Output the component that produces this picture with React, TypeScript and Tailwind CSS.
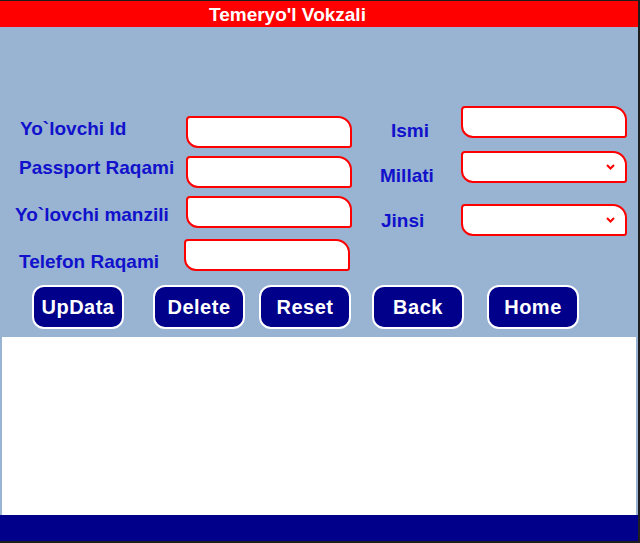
import React from "react";

const labelCls =
  "font-['Liberation_Sans',Arial,sans-serif] font-bold text-[19px] text-[#1111cc] leading-none whitespace-nowrap";

const boxCls =
  "h-[32px] w-[166px] bg-white border-2 border-[#ff0000] rounded-tl-[4px] rounded-tr-[14px] rounded-bl-[12px] rounded-br-[3px]";

const Field = ({ select }: { select?: boolean }) => (
  <div className={boxCls + " shrink-0 flex items-center justify-end pr-[10px]"}>
    {select && (
      <svg width="9" height="6" viewBox="0 0 9 6">
        <path d="M1 1 L4.5 4.5 L8 1" stroke="#ff0000" strokeWidth="2" fill="none" />
      </svg>
    )}
  </div>
);

const Row = ({
  label,
  labelBox,
  select,
  className,
}: {
  label: string;
  labelBox: string;
  select?: boolean;
  className?: string;
}) => (
  <div className={"flex items-start h-[32px] " + (className || "")}>
    <div className={labelBox}>
      <span className={labelCls}>{label}</span>
    </div>
    <Field select={select} />
  </div>
);

const Btn = ({ label, className }: { label: string; className?: string }) => (
  <button
    className={
      "h-[44px] w-[92px] shrink-0 rounded-[12px] border-2 border-white bg-[#00008b] text-white font-['Liberation_Sans',Arial,sans-serif] font-bold text-[20px] tracking-[0.5px] " +
      (className || "")
    }
  >
    {label}
  </button>
);

export default function App() {
  return (
    <div className="w-[640px] h-[543px] bg-[#1e1e1e] pt-px pr-[2px] pb-[2px] flex flex-col">
      <div className="h-[26px] shrink-0 bg-[#ff0000] flex items-center pl-[209px]">
        <span className="font-['Liberation_Sans',Arial,sans-serif] font-bold text-[19px] text-white leading-none">
          Temeryo'l Vokzali
        </span>
      </div>

      <div className="bg-[#98b4d2] flex-1 flex flex-col">
        <div className="flex">
          {/* left column */}
          <div className="w-[360px] pt-[89px] flex flex-col">
            <Row label="Yo`lovchi Id" labelBox="w-[186px] pl-[20px] mt-[1px]" />
            <Row label="Passport Raqami" labelBox="w-[186px] pl-[19px] mt-0" className="mt-[8px]" />
            <Row label="Yo`lovchi manzili" labelBox="w-[186px] pl-[15px] mt-[7px]" className="mt-[8px]" />
            <Row label="Telefon Raqami" labelBox="w-[184px] pl-[19px] mt-[11px]" className="mt-[11px]" />
          </div>

          {/* right column */}
          <div className="pt-[79px] flex flex-col">
            <Row label="Ismi" labelBox="w-[101px] pl-[31px] mt-[13px]" />
            <Row label="Millati" labelBox="w-[101px] pl-[20px] mt-[13px]" select className="mt-[13px]" />
            <Row label="Jinsi" labelBox="w-[101px] pl-[21px] mt-[5px]" select className="mt-[21px]" />
          </div>
        </div>

        <div className="flex mt-[14px]">
          <Btn label="UpData" className="ml-[32px]" />
          <Btn label="Delete" className="ml-[29px]" />
          <Btn label="Reset" className="ml-[14px]" />
          <Btn label="Back" className="ml-[21px]" />
          <Btn label="Home" className="ml-[23px]" />
        </div>

        <div className="mt-[8px] mx-[2px] h-[178px] shrink-0 bg-white" />
      </div>

      <div className="h-[26px] shrink-0 bg-[#00008b]" />
    </div>
  );
}
